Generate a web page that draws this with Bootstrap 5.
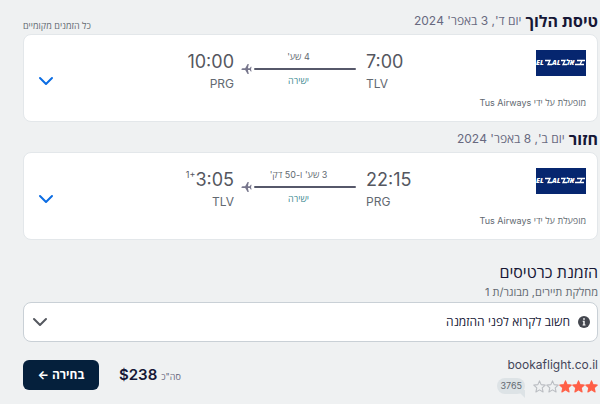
<!DOCTYPE html>
<html lang="he" dir="rtl">
<head>
<meta charset="utf-8">
<meta name="viewport" content="width=device-width, initial-scale=1">
<title>הזמנת כרטיסים</title>
<link href="https://cdn.jsdelivr.net/npm/bootstrap@5.3.0/dist/css/bootstrap.min.css" rel="stylesheet">
<style>
body{background:#eff1f2;color:#161736;font-family:Inter,"Open Sans",sans-serif;font-size:12px;line-height:16px}
.page{padding:11px 2px 12px 23px}
.soft{color:#68697f}
.grayish{color:#626971}
.leg-head{height:23px}
.leg-title{font-size:16px;line-height:20px;font-weight:700;margin:0}
.leg-date{font-size:12px;line-height:20px}
.tiny{font-size:9px;line-height:14px}
.flight{border:1px solid #e3e7ea;border-radius:8px;min-height:88px;padding:15px 11px 9px 14px}
.return{margin-top:7px}
.airline{width:160px}
.airline svg{width:50px;height:26px}
.stop{width:60px}
.clock{font-size:18px;line-height:24px;color:#55575f}
.clock sup{font-size:9px;top:-8px}
.code{font-size:12px;line-height:20px}
.path{width:115px;margin:0 10px 0 7px}
.path svg{width:115px;height:10px}
.direct{color:#3b8991}
.toggle{width:16px;height:16px}
.flight .btn{color:#0c6de3}
.section-title{font-size:16px;line-height:20px;font-weight:500;margin:0}
.cabin{font-size:11px;line-height:20px}
.booking{margin-top:22px}
.notice{border:1px solid #c9d0d6;border-radius:8px;height:40px;color:#161736;padding:0 7px 0 8px;font-size:12px}
.notice .toggle{color:#55585f}
.checkout{margin-top:14px}
.site{font-size:12px;line-height:18px;color:#44465a}
.stars svg{width:13px;height:13px}
.on{fill:#ff5f46;stroke:#ff5f46}
.off{fill:none;stroke:#babdc2}
.reviews{position:relative;background:#dde3e6;border-radius:8px;padding:1px 3px;color:#626971;font-size:9px}
.reviews::after{content:"";position:absolute;right:0;bottom:-4px;border-top:8px solid #dde3e6;border-left:8px solid transparent;z-index:-1}
.price{font-size:15px;line-height:22px;font-weight:600}
.total{margin-left:20px}
.choose{background:#05203c;color:#fff;border-radius:6px;width:76px;height:30px;font-size:12px;font-weight:700}
.choose:hover{background:#154679;color:#fff}
</style>
<script src="https://cdn.jsdelivr.net/npm/bootstrap@5.3.0/dist/js/bootstrap.bundle.min.js"></script>
</head>
<body>
<svg class="d-none" aria-hidden="true">
<symbol id="elal" viewBox="0 0 50 26"><path fill="#06266f" d="M0 0h50v26H0z"/><g fill="#fff" font-family="Open Sans,sans-serif" font-size="7" font-weight="800" font-style="italic" direction="ltr"><text x="0" y="15">EL</text><text x="16" y="15">AL</text><text x="30" y="15">אל</text></g><path fill="none" stroke="#fff" stroke-width="1.3" d="M9 10.5h5l-2 4h4M25 10.5h4l-2 4h4M41 10.5h8M39 14.5h9M46 10.5l-2 4"/></symbol>
<symbol id="plane-line" viewBox="0 0 115 10"><path stroke="#56586a" stroke-width="2" stroke-linecap="round" d="M14 5h100"/><path fill="#77768c" d="M0 5.2 1.5 4.3H4.2L6.6 0h1.2L6.9 4.3H8.8L9.8 2.8h.8L10 5.2l.6 2.4h-.8L8.8 6.1H6.9l.9 3.9H6.6L4.2 6.1H1.5z"/></symbol>
<symbol id="chev" viewBox="0 0 16 16"><path fill="none" stroke="currentColor" stroke-width="2" stroke-linecap="round" stroke-linejoin="round" d="m2 5 6 6 6-6"/></symbol>
<symbol id="star" viewBox="0 0 12 12"><path stroke-width="1" stroke-linejoin="round" d="m6 .8 1.5 3.5 3.8.4-2.8 2.5.8 3.8L6 9.1 2.7 11l.8-3.8L.7 4.7l3.8-.4z"/></symbol>
</svg>
<main class="page">
<section>
<div class="leg-head d-flex justify-content-between align-items-start">
<div class="d-flex gap-1"><h2 class="leg-title">טיסת הלוך</h2><span class="leg-date soft">יום ד', 3 באפר' 2024</span></div>
<span class="tiny grayish pt-2">כל הזמנים מקומיים</span>
</div>
<article class="flight bg-white d-flex align-items-start">
<div class="airline d-flex flex-column align-items-start"><svg role="img" aria-label="EL AL"><use href="#elal"/></svg><span class="tiny grayish mt-3 pt-1">מופעלת על ידי Tus Airways</span></div>
<div class="stop" dir="ltr"><div class="clock">7:00</div><div class="code grayish">TLV</div></div>
<div class="path text-center"><div class="tiny grayish">4 שע'</div><svg class="d-block"><use href="#plane-line"/></svg><div class="tiny direct">ישירה</div></div>
<div class="stop text-end" dir="ltr"><div class="clock">10:00</div><div class="code grayish">PRG</div></div>
<button class="btn p-0 border-0 d-flex align-self-center me-auto" aria-label="פרטי הטיסה"><svg class="toggle"><use href="#chev"/></svg></button>
</article>
</section>
<section class="return">
<div class="leg-head d-flex gap-1"><h2 class="leg-title">חזור</h2><span class="leg-date soft">יום ב', 8 באפר' 2024</span></div>
<article class="flight bg-white d-flex align-items-start">
<div class="airline d-flex flex-column align-items-start"><svg role="img" aria-label="EL AL"><use href="#elal"/></svg><span class="tiny grayish mt-3 pt-1">מופעלת על ידי Tus Airways</span></div>
<div class="stop" dir="ltr"><div class="clock">22:15</div><div class="code grayish">PRG</div></div>
<div class="path text-center"><div class="tiny grayish">3 שע' ו-50 דק'</div><svg class="d-block"><use href="#plane-line"/></svg><div class="tiny direct">ישירה</div></div>
<div class="stop text-end" dir="ltr"><div class="clock"><sup>1+</sup>3:05</div><div class="code grayish">TLV</div></div>
<button class="btn p-0 border-0 d-flex align-self-center me-auto" aria-label="פרטי הטיסה"><svg class="toggle"><use href="#chev"/></svg></button>
</article>
</section>
<section class="booking">
<h2 class="section-title">הזמנת כרטיסים</h2>
<div class="cabin grayish">מחלקת תיירים, מבוגר/ת 1</div>
<button class="notice btn bg-white w-100 d-flex align-items-center gap-2">
<svg width="12" height="12" viewBox="0 0 12 12"><circle cx="6" cy="6" r="6" fill="#44474f"/><path fill="#fff" d="M5.2 2.3h1.6v1.5H5.2zM4.7 4.8h2v3.6h.8v1H4.6v-1h.7V5.8h-.6z"/></svg>
<span>חשוב לקרוא לפני ההזמנה</span><svg class="toggle me-auto"><use href="#chev"/></svg></button>
<div class="checkout d-flex justify-content-between align-items-center">
<div><div class="site">bookaflight.co.il</div>
<div class="d-flex align-items-center gap-2 mt-1"><div class="stars d-flex" role="img" aria-label="3 מתוך 5"><svg class="on"><use href="#star"/></svg><svg class="on"><use href="#star"/></svg><svg class="on"><use href="#star"/></svg><svg class="off"><use href="#star"/></svg><svg class="off"><use href="#star"/></svg></div><span class="reviews tiny">3765</span></div></div>
<div class="d-flex align-items-center"><div class="total d-flex align-items-baseline gap-1"><span class="tiny soft">סה"כ</span><strong class="price" dir="ltr">$238</strong></div><button class="choose btn p-0">בחירה ←</button></div>
</div>
</section>
</main>
</body>
</html>
